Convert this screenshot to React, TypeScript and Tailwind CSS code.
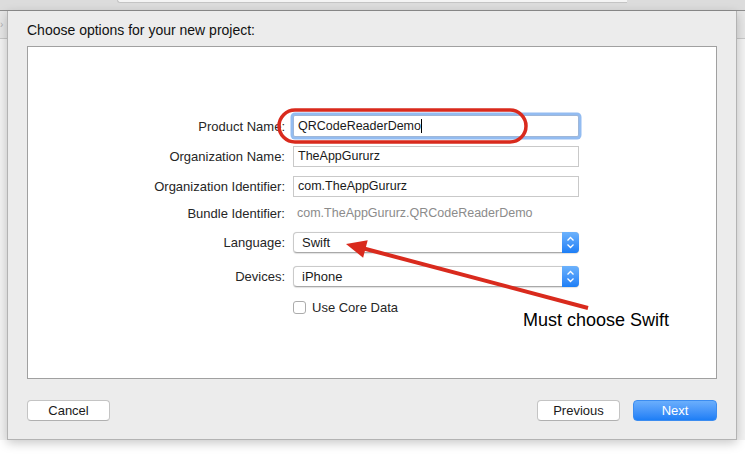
import type { ReactNode } from 'react';

function Row({ label, children, className }: { label: string; children: ReactNode; className: string }) {
  return (
    <div className={`flex items-center ${className}`}>
      <div className="w-[257px] text-right text-[13px] leading-none text-[#262626]">{label}</div>
      <div className="ml-[8px] w-[286px] h-full flex items-center">{children}</div>
    </div>
  );
}

function TextField({ value, focused }: { value: string; focused?: boolean }) {
  return (
    <div
      className={`w-full h-full bg-white flex items-center pl-[4px] text-[12.5px] text-[#1a1a1a] ${
        focused
          ? 'border border-[#9fb7d8] rounded-[2px] shadow-[0_0_0_2.5px_#93bcf1]'
          : 'border border-[#c9c9c9]'
      }`}
    >
      <span>{value}</span>
      {focused && <span className="w-px h-[14px] bg-black" />}
    </div>
  );
}

function Popup({ value }: { value: string }) {
  return (
    <div className="w-full h-full flex bg-white rounded-[4px] border border-[#cacaca] border-b-[#a9a9a9] shadow-[0_0.5px_1px_rgba(0,0,0,0.12)]">
      <div className="flex-1 flex items-center pl-[8px] text-[13px] text-[#1a1a1a]">{value}</div>
      <div className="-my-px -mr-px w-[17px] rounded-r-[4px] bg-linear-to-b from-[#6cb2fc] to-[#1b7ef6] flex items-center justify-center">
        <svg width="17" height="21" viewBox="0 0 17 21">
          <path d="M5.5 8.5 L8.5 5.5 L11.5 8.5" fill="none" stroke="white" strokeWidth="1.3" />
          <path d="M5.5 12.5 L8.5 15.5 L11.5 12.5" fill="none" stroke="white" strokeWidth="1.3" />
        </svg>
      </div>
    </div>
  );
}

export default function App() {
  return (
    <div className="relative w-[745px] h-[457px] overflow-hidden bg-white font-['Liberation_Sans',Arial,sans-serif]">
      {/* window toolbar behind the sheet */}
      <div className="h-[11px] bg-[#dcdcdc] border-b border-[#8e8e8e]">
        <div className="ml-[117px] w-[510px] h-[3px] bg-[#f4f4f4] border-b border-l border-[#c4c4c4] rounded-bl-[4px]" />
      </div>

      <div className="flex h-[429px]">
        <div className="w-[7px] flex flex-col">
          <div className="h-[28px] bg-[#e6e6e6] border-b border-[#c8c8c8] flex items-center text-[10px] text-[#b0b0b0] leading-none">›</div>
          <div className="flex-1 bg-[#f3f3f3]" />
        </div>

        <div className="w-[730px] bg-[#ececec] border-l border-r border-b border-[#b3b3b3] shadow-[0_3px_10px_rgba(0,0,0,0.22)] pl-[19px] pr-[19px] pt-[11px] pb-[18px] z-10">
          <div className="text-[14px] leading-[17px] text-[#111] mb-[7px]">Choose options for your new project:</div>

          <div className="h-[333px] bg-white border border-[#a0a0a0] pt-[68px]">
            <Row label="Product Name:" className="h-[22px]">
              <TextField value="QRCodeReaderDemo" focused />
            </Row>
            <Row label="Organization Name:" className="h-[21px] mt-[9px]">
              <TextField value="TheAppGururz" />
            </Row>
            <Row label="Organization Identifier:" className="h-[21px] mt-[9px]">
              <TextField value="com.TheAppGururz" />
            </Row>
            <Row label="Bundle Identifier:" className="h-[16px] mt-[8px]">
              <span className="pl-[4px] text-[12.5px] text-[#8b8b8b]">com.TheAppGururz.QRCodeReaderDemo</span>
            </Row>
            <Row label="Language:" className="h-[21px] mt-[11px]">
              <Popup value="Swift" />
            </Row>
            <Row label="Devices:" className="h-[21px] mt-[13px]">
              <Popup value="iPhone" />
            </Row>
            <div className="flex items-center h-[14px] mt-[13px] pl-[265px]">
              <div className="w-[13px] h-[13px] bg-white border border-[#acacac] rounded-[3px]" />
              <span className="ml-[6px] text-[13px] leading-none text-[#262626]">Use Core Data</span>
            </div>
          </div>

          <div className="flex items-center h-[21px] mt-[21px]">
            <button className="w-[83px] h-[21px] bg-white border border-[#c4c4c4] border-b-[#b0b0b0] rounded-[4px] text-[13px] leading-none text-[#1a1a1a]">
              Cancel
            </button>
            <div className="flex-1" />
            <button className="w-[83px] h-[21px] bg-white border border-[#c4c4c4] border-b-[#b0b0b0] rounded-[4px] text-[13px] leading-none text-[#1a1a1a]">
              Previous
            </button>
            <button className="ml-[13px] w-[84px] h-[21px] rounded-[4px] bg-linear-to-b from-[#6aaefc] to-[#1c7ef6] border border-[#3b8cf0] text-[13px] leading-none text-white">
              Next
            </button>
          </div>
        </div>

        <div className="w-[8px] flex flex-col">
          <div className="h-[28px] bg-[#e6e6e6] border-b border-[#c8c8c8]" />
          <div className="flex-1 bg-[#f3f3f3]" />
        </div>
      </div>

      {/* red annotations drawn over the dialog */}
      <svg className="absolute left-0 top-0 pointer-events-none z-20" width="745" height="457" viewBox="0 0 745 457">
        <rect x="279" y="110" width="247" height="32" rx="16" fill="none" stroke="#d92a1d" strokeWidth="3.5" />
        <line x1="588" y1="308" x2="362" y2="248" stroke="#d92a1d" strokeWidth="4" />
        <polygon points="346,244 367.7,240.3 363.1,257.7" fill="#d92a1d" />
      </svg>
      <div className="absolute left-[523px] top-[310px] z-20 text-[18px] leading-[20px] text-black">Must choose Swift</div>
    </div>
  );
}
